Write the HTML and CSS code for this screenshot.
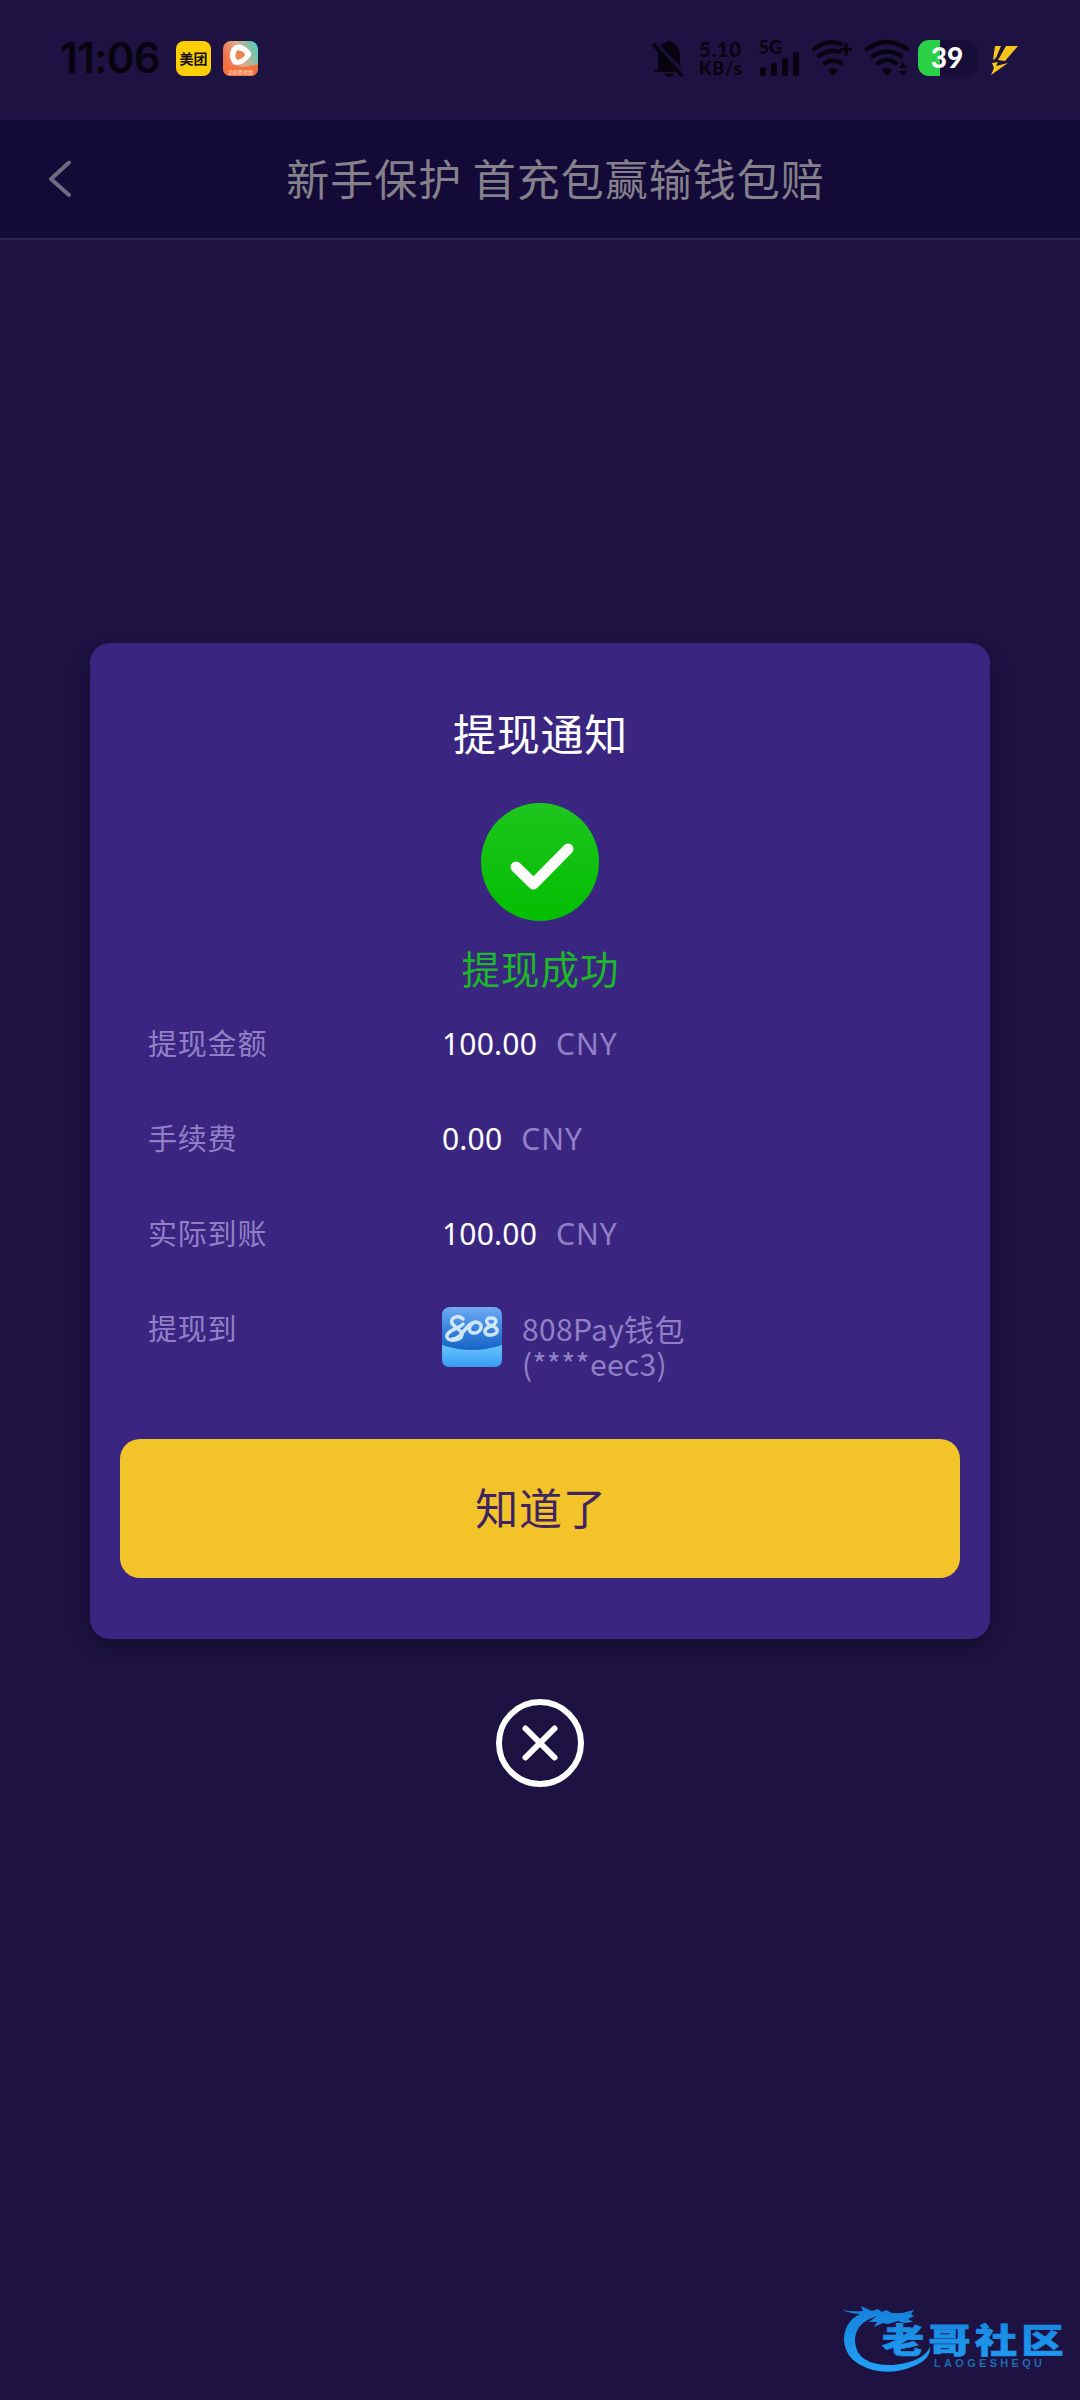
FILE: index.html
```html
<!DOCTYPE html>
<html lang="zh-CN">
<head>
<meta charset="utf-8">
<title>提现通知</title>
<link rel="stylesheet" href="styles.css">
</head>
<body>
<div class="status">
  <span class="clock">11:06</span>
  <span class="app app-mt">美团</span>
  <svg class="app" viewBox="0 0 35 35">
    <defs>
      <linearGradient id="vid" x1="0" y1="0.6" x2="1" y2="0.2"><stop offset="0" stop-color="#f5683a"/><stop offset=".5" stop-color="#e0a988"/><stop offset="1" stop-color="#52cdb8"/></linearGradient>
    </defs>
    <rect width="35" height="35" rx="8" fill="url(#vid)"/>
    <path d="M0 23Q17 29 35 23V27Q35 35 27 35H8Q0 35 0 27Z" fill="#f4703f"/>
    <path d="M13 4Q18 2 25 8Q31 13 26 17Q20 24 14 24Q8 24 7 15Q7 6 13 4Z" fill="#fff"/>
    <path d="M14 9.500Q16 8.500 20 11Q23.500 13.500 20.500 16Q16 19.500 13.800 18.500Q11 15 14 9.500Z" fill="#ec8450"/>
    <text x="17.500" y="32.500" class="app-caption" text-anchor="middle">追剧看视频</text>
  </svg>
  <div class="tray">
    <svg class="bell" viewBox="0 0 32 38"><path d="M5 29V15Q5 5 12 3Q16-1 20 3Q27 6 27 15V24L30 29V32H1V30Z"/><path d="M11 33.500H21Q19 37 16 37T11 33.500Z"/><path d="M2 2L31 33" class="slash"/><path d="M0 4L29 36" class="slash-ink"/></svg>
    <div class="speed"><span>5.10</span><span class="unit">KB/s</span></div>
    <svg class="signal" viewBox="0 0 42 38"><text x="-.5" y="13.500">5G</text><rect x="1" y="27" width="6" height="9" rx="2.500"/><rect x="12" y="23" width="6" height="13" rx="2.500"/><rect x="23" y="18" width="6" height="18" rx="2.500"/><rect x="34" y="12" width="6" height="24" rx="2.500"/></svg>
    <svg class="wifi" viewBox="0 0 44 38"><g class="arcs"><path d="M3 9Q16-1 30 4"/><path d="M8 16Q18 9 28 12"/><path d="M14 23Q22 18 30 23"/></g><path d="M17 30Q22 26 27 30L22 36Z"/><path d="M29 9.500H41M35 3.500V15.500" class="plus"/></svg>
    <svg class="wifi wifi-b" viewBox="0 0 44 38"><g class="arcs"><path d="M2 9Q22-5 42 9"/><path d="M8 16Q22 7 36 16"/><path d="M13 23Q22 17 31 23"/></g><path d="M17 30Q22 26 27 30L22 36Z"/><path d="M34 28L38 22L42 28ZM34 31H42L38 36Z"/></svg>
    <div class="battery"><span>39</span></div>
    <svg class="bolt" viewBox="0 0 30 32"><path d="M6 3H12L7 15L4 17ZM17 3H29L16 18L9 17Z"/><path d="M3 20L9 19L7 23L19 20L2 32L5 25Z"/></svg>
  </div>
</div>
<header class="nav">
  <svg class="back" viewBox="0 0 24 38"><path d="M21 2.500L3 19L21 35"/></svg>
  <h1>新手保护 首充包赢输钱包赔</h1>
</header>
<main class="stage">
  <section class="card">
    <h2>提现通知</h2>
    <svg class="ok" viewBox="0 0 118 118"><defs><linearGradient id="green" x1="0" y1="0" x2="0" y2="1"><stop offset="0" stop-color="#1ec51e"/><stop offset="1" stop-color="#02be00"/></linearGradient></defs><circle cx="59" cy="59" r="59" fill="url(#green)"/><path d="M35 64L52.500 81L87 46" /></svg>
    <p class="result">提现成功</p>
    <dl class="rows">
      <div class="row"><dt>提现金额</dt><dd><b>100.00</b><span>CNY</span></dd></div>
      <div class="row"><dt>手续费</dt><dd><b>0.00</b><span>CNY</span></dd></div>
      <div class="row"><dt>实际到账</dt><dd><b>100.00</b><span>CNY</span></dd></div>
      <div class="row"><dt>提现到</dt><dd>
        <svg class="wallet" viewBox="0 0 60 60"><defs>
          <linearGradient id="w1" x1="0" y1="0" x2="0" y2="1"><stop offset="0" stop-color="#72abf3"/><stop offset=".35" stop-color="#3c86df"/><stop offset=".7" stop-color="#1866c9"/></linearGradient>
          <linearGradient id="w2" x1="0" y1="0" x2="0" y2="1"><stop offset="0" stop-color="#68c4fb"/><stop offset="1" stop-color="#389cf2"/></linearGradient></defs>
          <rect width="60" height="60" rx="8" fill="url(#w1)"/><path d="M0 38Q30 48 60 38V52Q60 60 52 60H8Q0 60 0 52Z" fill="url(#w2)"/>
          <g class="loops"><path d="M21 12C16 7 8 11 10 16C12 21 21 23 20 28C19 34 6 35 5 30C4 23 17 22 21 17"/><path d="M10 32C21 32 24 15 34 15C43 16 39 27 31 26C25 25 27 17 33 15"/><path d="M50 19C43 17 43 11 49 11C56 11 55 17 49 19C40 22 42 29 49 28C57 27 57 21 50 19Z"/></g>
        </svg>
        <p class="account">808Pay钱包<br>(****eec3)</p></dd></div>
    </dl>
    <button class="confirm">知道了</button>
  </section>
  <svg class="close" viewBox="0 0 88 88"><circle cx="44" cy="44" r="41"/><path d="M29.500 29.500L58.500 58.500M58.500 29.500L29.500 58.500"/></svg>
</main>
<svg class="brand" viewBox="0 0 230 80">
  <defs><linearGradient id="br" gradientUnits="userSpaceOnUse" x1="0" y1="10" x2="0" y2="70"><stop offset="0" stop-color="#1683dc"/><stop offset="1" stop-color="#22a2f7"/></linearGradient></defs>
  <g fill="url(#br)">
  <path d="M37 14Q14 21 15 40Q17 64 53 63Q83 60 90 45Q91 57 74 64Q53 73 33 68Q5 60 4 38Q4 20 20 12Q12 12 2 8Q13 10 23 9L21 4L32 9L38 7L42 10L46 8L52 11L62 11L74 8L71 12L74 14L68 17L73 20L64 21L58 19L48 22L43 21L34 25L37 20L29 20Z"/>
  <text class="brand-name" transform="scale(1.25 1)" x="33.500" y="51.500">老哥社区</text></g>
  <text class="brand-latin" x="94" y="64.500" textLength="108">LAOGESHEQU</text>
</svg>
</body>
</html>
```
FILE: styles.css
```css
* { box-sizing: border-box; }
body {
  position: relative;
  margin: 0;
  height: 2400px;
  overflow: hidden;
  display: flex;
  flex-direction: column;
  background: #1d1242;
  font-family: "Noto Sans CJK SC", sans-serif;
  color: #fff;
}
h1, h2, p, dl, dd { margin: 0; font-weight: 400; }

.status {
  height: 120px;
  display: flex;
  align-items: flex-start;
  padding: 40px 61px 0 60px;
}
.clock {
  width: 104px;
  margin-right: 12px;
  font: 600 42px/36px Inter, sans-serif;
  letter-spacing: -.7px;
  color: #07040f;
}
.app { width: 35px; height: 35px; margin-top: 1px; margin-right: 12px; flex: none; }
.app-mt {
  border-radius: 8px;
  background: #fbcf08;
  color: #181000;
  font-size: 14px;
  font-weight: 700;
  line-height: 34px;
  text-align: center;
}
.app-caption { font-size: 5px; fill: #ffe0cf; }
.tray { margin-left: auto; display: flex; fill: #07040f; color: #07040f; }
.tray svg { flex: none; height: 38px; overflow: visible; }
.bell { width: 32px; margin-right: 14px; }
.slash { stroke: #1d1242; stroke-width: 3; }
.slash-ink { stroke: #07040f; stroke-width: 3.5; }
.speed {
  width: 46px;
  margin-right: 14px;
  display: flex;
  flex-direction: column;
  font: 900 20px/18px Lato, sans-serif;
  letter-spacing: .8px;
}
.unit { font-size: 18px; line-height: 20px; }
.signal { width: 42px; margin-right: 10px; }
.signal text { font: 900 18px Lato, sans-serif; }
.wifi { width: 44px; margin-right: 10px; }
.wifi-b { margin-right: 9px; }
.arcs { fill: none; stroke: #07040f; stroke-width: 4.5; stroke-linecap: round; }
.plus { stroke: #07040f; stroke-width: 3.5; }
.battery {
  width: 60px;
  height: 36px;
  border-radius: 11px;
  background: linear-gradient(90deg, #2bd144 22px, #160d38 22px);
  font: 900 28px/35px Lato, sans-serif;
  color: #fff;
  text-align: center;
  margin-right: 11px;
  padding-right: 2px;
}
.bolt { width: 30px; fill: #f8c51c; }

.nav {
  height: 120px;
  display: grid;
  grid-template-columns: 120px 1fr 89px;
  align-items: center;
  background: #140a38;
  border-bottom: 2px solid #2e2353;
}
.back { width: 24px; height: 38px; margin-left: 48px; fill: none; stroke: #6f6a81; stroke-width: 4; stroke-linecap: round; stroke-linejoin: round; }
.nav h1 { padding-bottom: 5px; font-size: 43px; letter-spacing: 1px; line-height: 60px; text-align: center; color: #85818b; white-space: nowrap; }

.stage { padding-top: 403px; display: flex; flex-direction: column; align-items: center; }
.card {
  width: 900px;
  height: 996px;
  padding: 59px 30px;
  border-radius: 20px;
  background: #3a2681;
  box-shadow: 0 8px 20px rgba(0, 0, 0, .3);
  display: flex;
  flex-direction: column;
  align-items: center;
}
.card h2 { padding-left: 1px; font-size: 43px; line-height: 60px; letter-spacing: .8px; }
.ok { width: 118px; height: 118px; margin-top: 41px; }
.ok path { fill: none; stroke: #fff; stroke-width: 11; stroke-linecap: round; stroke-linejoin: round; }
.result { margin-top: 18px; padding-left: 1px; font-size: 38.5px; line-height: 56px; letter-spacing: 1px; color: #1eb727; }
.rows { width: 100%; margin-top: 31px; padding: 0 28px; }
.row { height: 95px; display: flex; font-family: "Noto Sans", "Noto Sans CJK SC", sans-serif; font-size: 30px; line-height: 35px; color: #9180c6; }
.row dt { width: 294px; font-size: 29px; letter-spacing: .8px; }
.row dd { display: flex; }
.row b { margin-right: 19px; font-weight: 400; letter-spacing: .2px; color: #fff; }
.row span { letter-spacing: 1px; }
.account { font-family: "Noto Sans CJK SC", sans-serif; letter-spacing: .35px; }
.wallet { width: 60px; height: 60px; margin: -4px 20px 0 0; }
.loops { fill: none; stroke: #cfe6fb; stroke-width: 3.5; stroke-linecap: round; }
.confirm {
  width: 840px;
  height: 139px;
  margin-top: 33px;
  padding: 0 0 6px 2px;
  flex: none;
  border: 0;
  border-radius: 20px;
  background: #f2c42a;
  font: 400 43px "Noto Sans CJK SC", sans-serif;
  letter-spacing: .8px;
  color: #3f2363;
}
.close { width: 88px; height: 88px; margin-top: 60px; fill: none; stroke: #fff; stroke-width: 6; stroke-linecap: round; }
.brand { position: absolute; left: 840px; top: 2302px; width: 230px; height: 80px; }
.brand-name { font-size: 34px; font-weight: 900; letter-spacing: 3.2px; stroke: #1b90e8; stroke-width: .6; }
.brand-latin { font: 700 11px "Liberation Sans", sans-serif; fill: #1b6db0; }
```
